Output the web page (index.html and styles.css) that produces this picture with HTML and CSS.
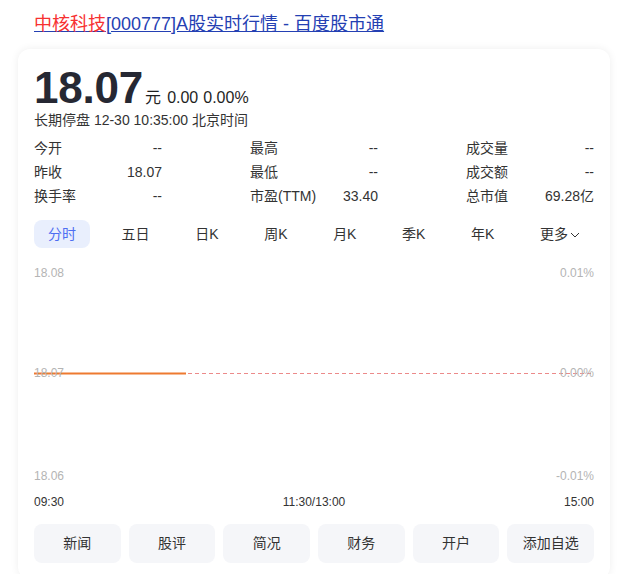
FILE: index.html
```html
<!DOCTYPE html>
<html lang="zh-CN">
<head>
<meta charset="utf-8">
<title>中核科技[000777]A股实时行情 - 百度股市通</title>
<link rel="stylesheet" href="styles.css">
</head>
<body>
<div class="title"><a class="title-link" href="#"><span class="hl">中核科技</span>[000777]A股实时行情 - 百度股市通</a></div>
<div class="card">
  <div class="price-row">
    <span class="price">18.07</span>
    <span class="unit">元</span>
    <span class="change">0.00</span>
    <span class="change">0.00%</span>
  </div>
  <div class="status">长期停盘 12-30 10:35:00 北京时间</div>
  <div class="stats">
    <div class="stat"><span>今开</span><span>--</span></div>
    <div class="stat"><span>最高</span><span>--</span></div>
    <div class="stat"><span>成交量</span><span>--</span></div>
    <div class="stat"><span>昨收</span><span>18.07</span></div>
    <div class="stat"><span>最低</span><span>--</span></div>
    <div class="stat"><span>成交额</span><span>--</span></div>
    <div class="stat"><span>换手率</span><span>--</span></div>
    <div class="stat"><span>市盈(TTM)</span><span>33.40</span></div>
    <div class="stat"><span>总市值</span><span>69.28亿</span></div>
  </div>
  <div class="tabs">
    <span class="tab active">分时</span>
    <span class="tab">五日</span>
    <span class="tab">日K</span>
    <span class="tab">周K</span>
    <span class="tab">月K</span>
    <span class="tab">季K</span>
    <span class="tab">年K</span>
    <span class="tab more">更多<svg class="chev" width="10" height="6" viewBox="0 0 10 6"><path d="M1 1 L5 5 L9 1" fill="none" stroke="#333" stroke-width="1"/></svg></span>
  </div>
  <div class="chart">
    <svg class="lines" width="560" height="238" viewBox="0 0 560 238">
      <line x1="0" y1="117.5" x2="560" y2="117.5" stroke="#ec8a8a" stroke-width="1" stroke-dasharray="4 3"/>
      <line x1="0" y1="117.5" x2="152" y2="117.5" stroke="#ee7a30" stroke-width="1.8"/>
    </svg>
    <span class="axis l top">18.08</span>
    <span class="axis l mid">18.07</span>
    <span class="axis l bot">18.06</span>
    <span class="axis r top">0.01%</span>
    <span class="axis r mid">0.00%</span>
    <span class="axis r bot">-0.01%</span>
  </div>
  <div class="times">
    <span>09:30</span>
    <span>11:30/13:00</span>
    <span>15:00</span>
  </div>
  <div class="buttons">
    <span class="btn">新闻</span>
    <span class="btn">股评</span>
    <span class="btn">简况</span>
    <span class="btn">财务</span>
    <span class="btn">开户</span>
    <span class="btn">添加自选</span>
  </div>
</div>
</body>
</html>
```
FILE: styles.css
```css
html, body {
  margin: 0;
  padding: 0;
  background: #fff;
}
body {
  font-family: "Liberation Sans", Arial, "Noto Sans CJK SC", sans-serif;
  color: #333;
  width: 617px;
  height: 574px;
  overflow: hidden;
}
.title {
  padding: 12px 0 0 34px;
  font-size: 18px;
  line-height: 24px;
}
.title-link {
  color: #2440b3;
  text-decoration: underline;
}
.hl {
  color: #f73131;
}
.card {
  margin: 13px 0 0 18px;
  width: 592px;
  box-sizing: border-box;
  padding: 17px 16px 16px 16px;
  border-radius: 12px;
  background: #fff;
  box-shadow: 0 0 8px rgba(0, 0, 0, 0.07);
}
.price-row {
  display: flex;
  align-items: baseline;
  color: #1f1f1f;
}
.price {
  font-size: 44px;
  line-height: 44px;
  font-weight: bold;
  color: #262833;
  letter-spacing: -0.2px;
}
.unit {
  font-size: 16px;
  line-height: 20px;
  margin-left: 2px;
}
.change {
  font-size: 16px;
  line-height: 20px;
  margin-left: 5px;
}
.unit + .change {
  margin-left: 6px;
}
.status {
  font-size: 14px;
  line-height: 20px;
  color: #333;
}
.stats {
  margin-top: 6px;
  display: grid;
  grid-template-columns: 128px 128px 128px;
  justify-content: space-between;
  font-size: 14px;
  line-height: 24px;
}
.stat {
  display: flex;
  justify-content: space-between;
}
.tabs {
  margin-top: 12px;
  display: flex;
  justify-content: space-between;
  font-size: 14px;
}
.tab {
  height: 28px;
  line-height: 28px;
  padding: 0 14px;
  border-radius: 8px;
  color: #333;
  display: flex;
  align-items: center;
}
.tab.active {
  background: #e9effd;
  color: #4e6ef2;
}
.chev {
  margin-left: 2px;
  margin-top: 1px;
}
.chart {
  position: relative;
  margin-top: 8px;
  height: 238px;
}
.lines {
  position: absolute;
  left: 0;
  top: 0;
}
.axis {
  position: absolute;
  font-size: 12px;
  line-height: 14px;
  color: #b4b4b4;
}
.axis.l { left: 0; }
.axis.r { right: 0; }
.axis.top { top: 10px; }
.axis.mid { top: 110px; }
.axis.bot { top: 213px; }
.times {
  display: flex;
  justify-content: space-between;
  font-size: 12px;
  line-height: 16px;
  color: #333;
}
.buttons {
  margin-top: 14px;
  display: flex;
  gap: 8px;
}
.btn {
  flex: 1;
  height: 39px;
  line-height: 39px;
  text-align: center;
  background: #f5f6f9;
  border-radius: 8px;
  font-size: 14px;
  color: #333;
}
```
